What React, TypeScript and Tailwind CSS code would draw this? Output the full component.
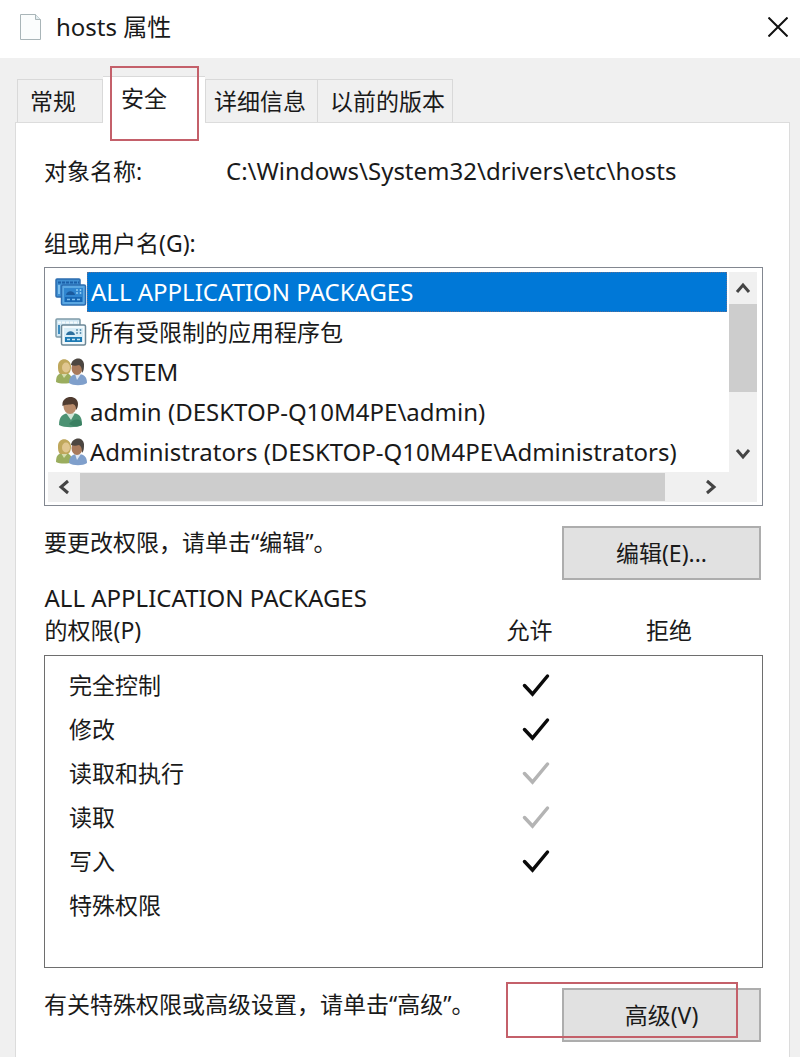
import type { ReactNode } from "react";
import { clsx } from "clsx";

const AppPackageIcon = ({ selected = false }: { selected?: boolean }) => (
  <svg viewBox="0 0 32 28" className="h-7 w-8 shrink-0" aria-hidden="true">
    <rect x="1" y="1" width="24" height="18" rx="1" fill={selected ? "#3f8fd2" : "#cfe6f3"} stroke={selected ? "#2d6cae" : "#7f9aa8"} strokeWidth="1.500" />
    <path d="M3 4.500h21" stroke={selected ? "#1b5fa8" : "#f4fafc"} strokeWidth="2" strokeDasharray="3 1" />
    <path d="M4 7v9" stroke={selected ? "#7fc0ee" : "#3d8cc0"} strokeWidth="2" />
    <rect x="6.500" y="7" width="24" height="20" rx="1.500" fill={selected ? "#5aa7e2" : "#f3fafd"} stroke={selected ? "#2a6db3" : "#6b8796"} strokeWidth="1.500" />
    <rect x="9" y="10" width="19" height="14" fill={selected ? "#2f85cf" : "#d8edf7"} />
    <path d="M11 17c1-5 8-5 9 0z" fill={selected ? "#1a5a9e" : "#2c6f9e"} />
    <path d="M22 11v5M25.500 11v5" stroke={selected ? "#8ccbf3" : "#5f93b1"} strokeDasharray="2 1" strokeWidth="1.500" />
    <rect x="10" y="19" width="17" height="5" fill={selected ? "#1767b4" : "#1d7ab4"} />
    <path d="M12 21.500h14" stroke={selected ? "#7fc0ee" : "#c6e6f5"} strokeWidth="1.500" strokeDasharray="3 2" />
  </svg>
);

const GroupIcon = () => (
  <svg viewBox="0 0 32 28" className="h-7 w-8 shrink-0" aria-hidden="true">
    <path d="M1 24c0-6 2-9 8-9s8 3 8 9c-4 2-12 2-16 0z" fill="#9aad5e" />
    <path d="M6 15l3 5 4-5z" fill="#d6dcae" />
    <path d="M3 8c0-9 12-9 13 0 0 4-1 7-3 8H5c-2-2-2-5-2-8z" fill="#bfa75c" />
    <ellipse cx="11" cy="9.500" rx="4" ry="5" fill="#e0c690" />
    <path d="M14 25c0-6 3-9 9-9s9 3 9 9c-4 3-14 3-18 0z" fill="#7f9fcb" />
    <path d="M20 16l2 6 4-6z" fill="#dfe8f4" />
    <ellipse cx="22" cy="10" rx="5.500" ry="7" fill="#a87a5c" />
    <path d="M16 7c1-8 12-9 13-1 0 4 0 7-2 9 0-5-1-7-3-8-3 1-5 1-8 0z" fill="#4c4641" />
  </svg>
);

const UserIcon = () => (
  <svg viewBox="0 0 32 32" className="h-8 w-8 shrink-0" aria-hidden="true">
    <path d="M4 29c0-8 3-12 12-12s11 4 11 12c-5 3-18 3-23 0z" fill="#4c9273" />
    <path d="M11 17l5 7 4-7z" fill="#d3e6d8" />
    <path d="M14 28c3-4 8-6 12-3l1 4c-3 2-9 2-13-1z" fill="#3b8062" />
    <ellipse cx="15" cy="10.500" rx="6.500" ry="7.500" fill="#b98c6c" />
    <path d="M7.500 10C6-1 23-2 23 8c0 3-1 5-2 6 0-4-1-5-3-6-4 1-7 0-10.500 2z" fill="#4f3b30" />
  </svg>
);

const ChevronIcon = ({ className }: { className?: string }) => (
  <svg viewBox="0 0 16 16" className={clsx("h-4 w-4", className)} fill="none" stroke="#444" strokeWidth="3" aria-hidden="true">
    <path d="M2 12l6-7 6 7" />
  </svg>
);

const CheckIcon = ({ muted }: { muted: boolean }) => (
  <svg
    viewBox="0 0 28 24"
    className="h-6 w-7"
    fill="none"
    stroke={muted ? "#b4b4b4" : "#0a0a0a"}
    strokeWidth="3.500"
    strokeLinecap="round"
    role="img"
    aria-label={muted ? "继承" : "允许"}
  >
    <path d="M2.500 12.500l8 8.500L25.500 3" />
  </svg>
);

const tabs = [
  { name: "常规", className: "h-[43px] w-[86px] pl-3 border-r" },
  { name: "安全", className: "h-[47px] w-[102px] pl-[18px]", active: true },
  { name: "详细信息", className: "h-[43px] w-[113px] pl-2 border-x" },
  { name: "以前的版本", className: "h-[43px] w-[135px] pl-3 border-r" },
];

const principals: { icon: ReactNode; name: string; cjk?: boolean; selected?: boolean }[] = [
  { icon: <AppPackageIcon selected />, name: "ALL APPLICATION PACKAGES", selected: true },
  { icon: <AppPackageIcon />, name: "所有受限制的应用程序包", cjk: true },
  { icon: <GroupIcon />, name: "SYSTEM" },
  { icon: <UserIcon />, name: "admin (DESKTOP-Q10M4PE\\admin)" },
  { icon: <GroupIcon />, name: "Administrators (DESKTOP-Q10M4PE\\Administrators)" },
];

const permissions = [
  { name: "完全控制", allow: "explicit" },
  { name: "修改", allow: "explicit" },
  { name: "读取和执行", allow: "inherited" },
  { name: "读取", allow: "inherited" },
  { name: "写入", allow: "explicit" },
  { name: "特殊权限", allow: "" },
];

function TitleBar() {
  return (
    <header className="flex h-[58px] items-center bg-white pr-2 pb-1 pl-5">
      <svg viewBox="0 0 22 28" className="h-7 w-[22px]" fill="#fbfdfd" stroke="#a9b5b8" aria-hidden="true">
        <path d="M.5 1.500h15l5 5v20h-20z" />
        <path d="M15.500 1.500v5h5" fill="#e3edf0" />
      </svg>
      <h1 className="ml-3.5 grow text-2xl">hosts 属性</h1>
      <button type="button" aria-label="关闭" className="flex h-8 w-7 items-center justify-center">
        <svg viewBox="0 0 20 20" className="h-5 w-5" stroke="#111" strokeWidth="2" aria-hidden="true">
          <path d="M.5.5l19 19M19.500.5l-19 19" />
        </svg>
      </button>
    </header>
  );
}

function TabStrip() {
  return (
    <div role="tablist" className="flex h-16 items-end pl-[17px]">
      {tabs.map((tab) => (
        <button
          key={tab.name}
          type="button"
          role="tab"
          aria-selected={!!tab.active}
          className={clsx(
            "relative border-t border-[#d9d9d9] text-left whitespace-nowrap",
            tab.active ? "z-10 -mb-px bg-white pb-1" : "bg-[#f0f0f0] first:border-l",
            tab.className
          )}
        >
          {tab.name}
          {tab.active && <span className="absolute -top-[11px] left-[7px] h-[75px] w-[89px] border-2 border-[#c4606a]" />}
        </button>
      ))}
    </div>
  );
}

function PrincipalList() {
  return (
    <div className="mt-2 border border-[#828790] bg-white pt-1 pr-[5px] pb-[3px] pl-[3px]">
      <div className="flex">
        <ul role="listbox" aria-labelledby="principals-label" className="min-w-0 grow pr-0.5 pl-[7px]">
          {principals.map((item) => (
            <li key={item.name} role="option" aria-selected={!!item.selected} className="flex h-10 items-center">
              {item.icon}
              <span
                className={clsx(
                  "flex h-full grow items-center pl-[3px] whitespace-nowrap",
                  !item.cjk && "text-2xl",
                  item.selected && "border border-dotted border-[#5a6f96] bg-[#0078d7] text-white"
                )}
              >
                {item.name}
              </span>
            </li>
          ))}
        </ul>
        <div className="flex w-7 shrink-0 flex-col bg-[#f0f0f0]">
          <button type="button" aria-label="向上滚动" className="flex h-8 items-center justify-center">
            <ChevronIcon />
          </button>
          <div className="h-[88px] bg-[#cdcdcd]" />
          <button type="button" aria-label="向下滚动" className="mt-auto flex h-9 items-center justify-center">
            <ChevronIcon className="rotate-180" />
          </button>
        </div>
      </div>
      <div className="flex h-[30px] bg-[#f0f0f0] pr-7">
        <button type="button" aria-label="向左滚动" className="flex w-8 items-center justify-center">
          <ChevronIcon className="-rotate-90" />
        </button>
        <div className="my-px grow bg-[#cdcdcd]" />
        <button type="button" aria-label="向右滚动" className="flex w-16 items-center justify-end pr-2.5">
          <ChevronIcon className="rotate-90" />
        </button>
      </div>
    </div>
  );
}

function PermissionTable() {
  return (
    <table className="mt-px w-full table-fixed border-collapse">
      <colgroup>
        <col />
        <col className="w-[140px]" />
        <col className="w-[163px]" />
      </colgroup>
      <thead>
        <tr className="align-bottom leading-[33px]">
          <th scope="col" className="pb-2 text-left font-normal">
            <span className="block text-[24px]">ALL APPLICATION PACKAGES</span>
            的权限(P)
          </th>
          <th scope="col" className="pb-2 font-normal">允许</th>
          <th scope="col" className="pr-6 pb-2 font-normal">拒绝</th>
        </tr>
      </thead>
      <tbody className="border border-[#6e6e6e] before:block before:h-[7px] after:block after:h-10">
        {permissions.map((permission) => (
          <tr key={permission.name} className="h-11">
            <th scope="row" className="pl-6 text-left font-normal">{permission.name}</th>
            <td className="pl-3">
              <div className="flex justify-center">
                {permission.allow && <CheckIcon muted={permission.allow === "inherited"} />}
              </div>
            </td>
            <td />
          </tr>
        ))}
      </tbody>
    </table>
  );
}

function PushButton({ children }: { children: ReactNode }) {
  return (
    <button type="button" className="h-[54px] w-[199px] border-2 border-[#adadad] bg-[#e1e1e1]">
      {children}
    </button>
  );
}

export default function App() {
  return (
    <div
      lang="zh-CN"
      className="flex min-h-screen flex-col bg-[#f0f0f0] font-['Noto_Sans','Noto_Sans_CJK_SC',sans-serif] text-[23px] leading-8 text-[#1a1a1a]"
    >
      <TitleBar />
      <TabStrip />
      <main className="mr-2.5 ml-[15px] grow border-x border-t border-[#dcdcdc] bg-white pt-8 pr-[26px] pb-4 pl-7">
        <dl className="flex">
          <dt className="w-[182px] shrink-0">对象名称:</dt>
          <dd className="text-2xl">C:\Windows\System32\drivers\etc\hosts</dd>
        </dl>
        <h2 id="principals-label" className="mt-10">组或用户名(G):</h2>
        <PrincipalList />
        <div className="mt-5 flex items-start justify-between pr-0.5">
          <p>要更改权限，请单击“编辑”。</p>
          <PushButton>编辑(E)...</PushButton>
        </div>
        <PermissionTable />
        <div className="mt-5 flex items-start justify-between pr-0.5">
          <p>有关特殊权限或高级设置，请单击“高级”。</p>
          <div className="relative">
            <PushButton>高级(V)</PushButton>
            <span className="pointer-events-none absolute -top-1.5 -left-14 h-14 w-[232px] border-2 border-[#c4606a]" />
          </div>
        </div>
      </main>
    </div>
  );
}
